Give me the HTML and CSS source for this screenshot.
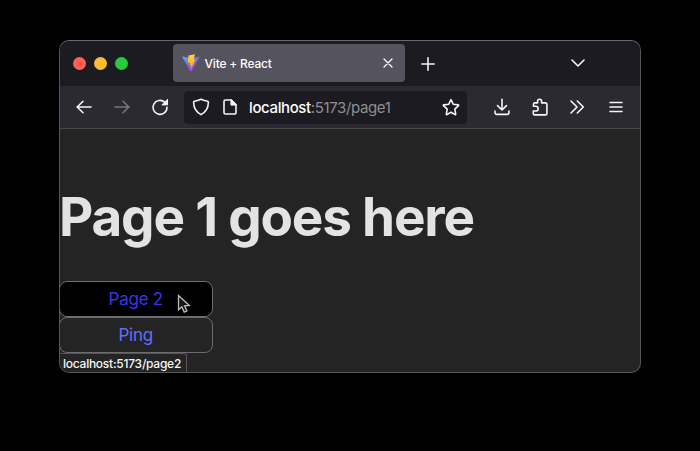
FILE: index.html
```html
<!DOCTYPE html>
<html lang="en">
<head>
<meta charset="utf-8">
<title>Vite + React</title>
<link rel="stylesheet" href="styles.css">
</head>
<body>
<main class="window">
  <header class="tabs">
    <div class="lights"><i class="red"></i><i class="yellow"></i><i class="green"></i></div>
    <div class="tab">
      <svg class="logo" width="18" height="18" viewBox="0 0 18 18">
        <defs>
          <linearGradient id="v" x1="0" y1="0" x2=".7" y2="1"><stop offset="0" stop-color="#41bdf5"/><stop offset=".55" stop-color="#8068ed"/><stop offset="1" stop-color="#bd42ef"/></linearGradient>
          <linearGradient id="b" x1="0" y1="0" x2="0" y2="1"><stop offset="0" stop-color="#ffd83c"/><stop offset="1" stop-color="#ffa51c"/></linearGradient>
        </defs>
        <path fill="url(#v)" d="M.4 2.600 9 4.200l8.200-1.500c.3 0 .5.2.3.5L9.300 17.300c-.2.3-.5.3-.7 0L.2 3z"/>
        <path fill="url(#b)" d="M13 .3 6.500 1.600 5.800 9l2.300-.5-.3 3 1.500-.4-.6 2.800c0 .3.300.4.500.1l4.300-8.500-1.800.3z"/>
      </svg>
      <span class="title">Vite + React</span>
      <svg class="icon close" width="10" height="10" viewBox="0 0 10 10"><path d="m1 1 8 8M9 1 1 9"/></svg>
    </div>
    <svg class="icon plus" width="14" height="14" viewBox="0 0 14 14"><path d="M7 .8v12.400M.8 7h12.400"/></svg>
    <svg class="icon chevron" width="14" height="8" viewBox="0 0 14 8"><path d="m1 1 6 6 6-6"/></svg>
  </header>
  <nav class="toolbar">
    <svg class="icon back" width="18" height="18" viewBox="0 0 18 18"><path d="M16 9H2m6-5.700L2.200 9 8 14.700"/></svg>
    <svg class="icon forward" width="18" height="18" viewBox="0 0 18 18"><path d="M2 9h14m-6-5.700L15.800 9 10 14.700"/></svg>
    <svg class="icon reload" width="18" height="18" viewBox="0 0 18 18"><path d="M16 9.300A7 7 0 1 1 13.700 4.200"/><path class="solid" d="M16.500 1.700v5.200h-5.200z"/></svg>
    <div class="address">
      <svg class="icon" width="18" height="18" viewBox="0 0 18 18"><path d="M9 1.200c2.300 1 4.500 1.700 6.500 2 .6.100.9.600.9 1.100-.1 5.300-2.200 9.700-7.400 12.300C3.800 14 1.700 9.600 1.600 4.300c0-.5.3-1 .9-1.100C4.500 2.900 6.700 2.200 9 1.200z"/></svg>
      <svg class="icon page" width="16" height="16" viewBox="0 0 16 16"><path d="M9.300 1H3.500A1.500 1.500 0 0 0 2 2.500v11A1.500 1.500 0 0 0 3.500 15h9a1.500 1.500 0 0 0 1.500-1.500V5.700L9.300 1v4.700H14"/><path class="solid" d="M9.300 1v4.700H14z"/></svg>
      <span class="url"><b>localhost</b>:5173/page1</span>
      <svg class="icon star" width="18" height="18" viewBox="0 0 18 18"><path d="m9 1.600 2.200 4.600 5 .7c.5.100.6.500.3.800l-3.700 3.500.9 5c.1.400-.2.600-.6.400L9 14.200l-4.100 2.400c-.4.200-.7 0-.6-.4l.9-5-3.700-3.500c-.3-.3-.2-.7.300-.8l5-.7z"/></svg>
    </div>
    <svg class="icon download" width="18" height="18" viewBox="0 0 18 18"><path d="M9 1.200v10.600M4.500 7.600 9 12l4.500-4.400M2 13v1.500A1.900 1.900 0 0 0 3.900 16.400h10.200a1.900 1.900 0 0 0 1.900-1.900V13"/></svg>
    <svg class="icon puzzle" width="18" height="18" viewBox="0 0 18 18"><path d="M2.500 8.300V6.300A1.400 1.400 0 0 1 3.900 4.900h2.700V3.200a2 2 0 0 1 4 0v1.700h3.900A1.400 1.400 0 0 1 15.900 6.300v9.200A1.400 1.400 0 0 1 14.500 16.900H3.700A1.400 1.400 0 0 1 2.300 15.500v-2.500h2.500a2.300 2.300 0 0 0 0-4.700z"/></svg>
    <svg class="icon more" width="16" height="14" viewBox="0 0 16 14"><path d="m2 1 6 6-6 6M8.300 1l6 6-6 6"/></svg>
    <svg class="icon menu" width="14" height="14" viewBox="0 0 14 14"><path d="M1 2.500h12M1 7h12M1 11.500h12"/></svg>
  </nav>
  <section class="content">
    <h1>Page 1 goes here</h1>
    <a class="button active">Page 2</a>
    <a class="button">Ping</a>
    <div class="status">localhost:5173/page2</div>
  </section>
</main>
<svg class="cursor" width="14" height="20" viewBox="0 0 14 20"><path d="M1.500 1.500v14.300l3.400-3 2.300 5.300 2.700-1.200-2.300-5.100 4.700-.3z"/></svg>
</body>
</html>
```
FILE: styles.css
```css
* { box-sizing: border-box; }
body {
  margin: 0;
  height: 451px;
  overflow: hidden;
  background: #000;
  font-family: Inter, "Liberation Sans", sans-serif;
}
.window {
  width: 582px;
  height: 333px;
  margin: 40px 0 0 59px;
  border: 1px solid #555558;
  border-top-color: #69696c;
  border-radius: 10px;
  overflow: hidden;
  background: #242424;
}
.tabs {
  display: flex;
  align-items: center;
  height: 45px;
  background: #1c1b22;
}
.lights { display: flex; gap: 8px; margin-left: 12.5px; }
.lights i { width: 13px; height: 13px; border-radius: 50%; }
.red { background: #ff5f57; }
.yellow { background: #febc2e; }
.green { background: #28c840; }
.tab {
  display: flex;
  align-items: center;
  width: 232px;
  height: 38px;
  margin: 0 0 1px 45px;
  padding: 0 12px 0 9px;
  border-radius: 4px;
  background: #55535e;
}
.title {
  margin: 2px 0 0 5px;
  color: #fbfbfe;
  font-size: 12px;
  font-weight: 500;
  letter-spacing: -0.2px;
  line-height: 38px;
}
.icon {
  flex: none;
  fill: none;
  stroke: #f4f4f7;
  stroke-width: 1.6;
  stroke-linecap: round;
  stroke-linejoin: round;
}
.solid { fill: #f4f4f7; stroke-width: 1; }
.close { margin-left: auto; stroke-width: 1.4; }
.plus { margin-left: 16px; }
.chevron { margin: 0 0 1px 136px; }
.toolbar {
  display: flex;
  align-items: center;
  height: 43px;
  border-bottom: 1px solid #48474f;
  background: #2b2a33;
}
.back { margin-left: 15px; }
.forward { margin-left: 20px; stroke: #77767e; }
.reload { margin-left: 20px; }
.address {
  display: flex;
  align-items: center;
  width: 283px;
  height: 33px;
  margin-left: 15px;
  padding: 0 7.5px 0 8px;
  border-radius: 4px;
  background: #1c1b22;
}
.page { margin-left: 12px; }
.url {
  margin: 1px 0 0 11px;
  color: #8f8e95;
  font-size: 15px;
  letter-spacing: -0.38px;
}
.url b { color: #fbfbfe; font-weight: 450; }
.star { margin-left: auto; }
.download { margin-left: 25.5px; }
.puzzle { margin-left: 20.5px; }
.more { margin-left: 20px; }
.menu { margin-left: 23.5px; }
.content { padding-top: 56px; }
h1 {
  margin: 0 0 32px;
  color: #e3e3e3;
  font-size: 53px;
  font-weight: 700;
  line-height: 64px;
  letter-spacing: -1.18px;
  white-space: nowrap;
  text-indent: -1px;
}
.button {
  display: block;
  width: 153.5px;
  height: 36px;
  margin-left: -1px;
  border: 1px solid #6c6c6e;
  border-radius: 8px;
  color: #646cff;
  font-size: 17px;
  line-height: 35px;
  letter-spacing: -0.25px;
  text-align: center;
}
.active { background: #000; color: #3a35e8; }
.status {
  width: 126.5px;
  height: 20px;
  padding-left: 3px;
  border: solid #56565a;
  border-width: 1px 1px 0 0;
  border-radius: 0 3px 0 0;
  background: #242424;
  color: #f5f5f5;
  font-size: 12px;
  font-weight: 500;
  line-height: 20px;
  letter-spacing: -0.25px;
  white-space: nowrap;
}
.cursor {
  position: absolute;
  left: 177px;
  top: 294px;
  fill: #151515;
  stroke: #bcbcbc;
  stroke-width: 1.3;
}
```
